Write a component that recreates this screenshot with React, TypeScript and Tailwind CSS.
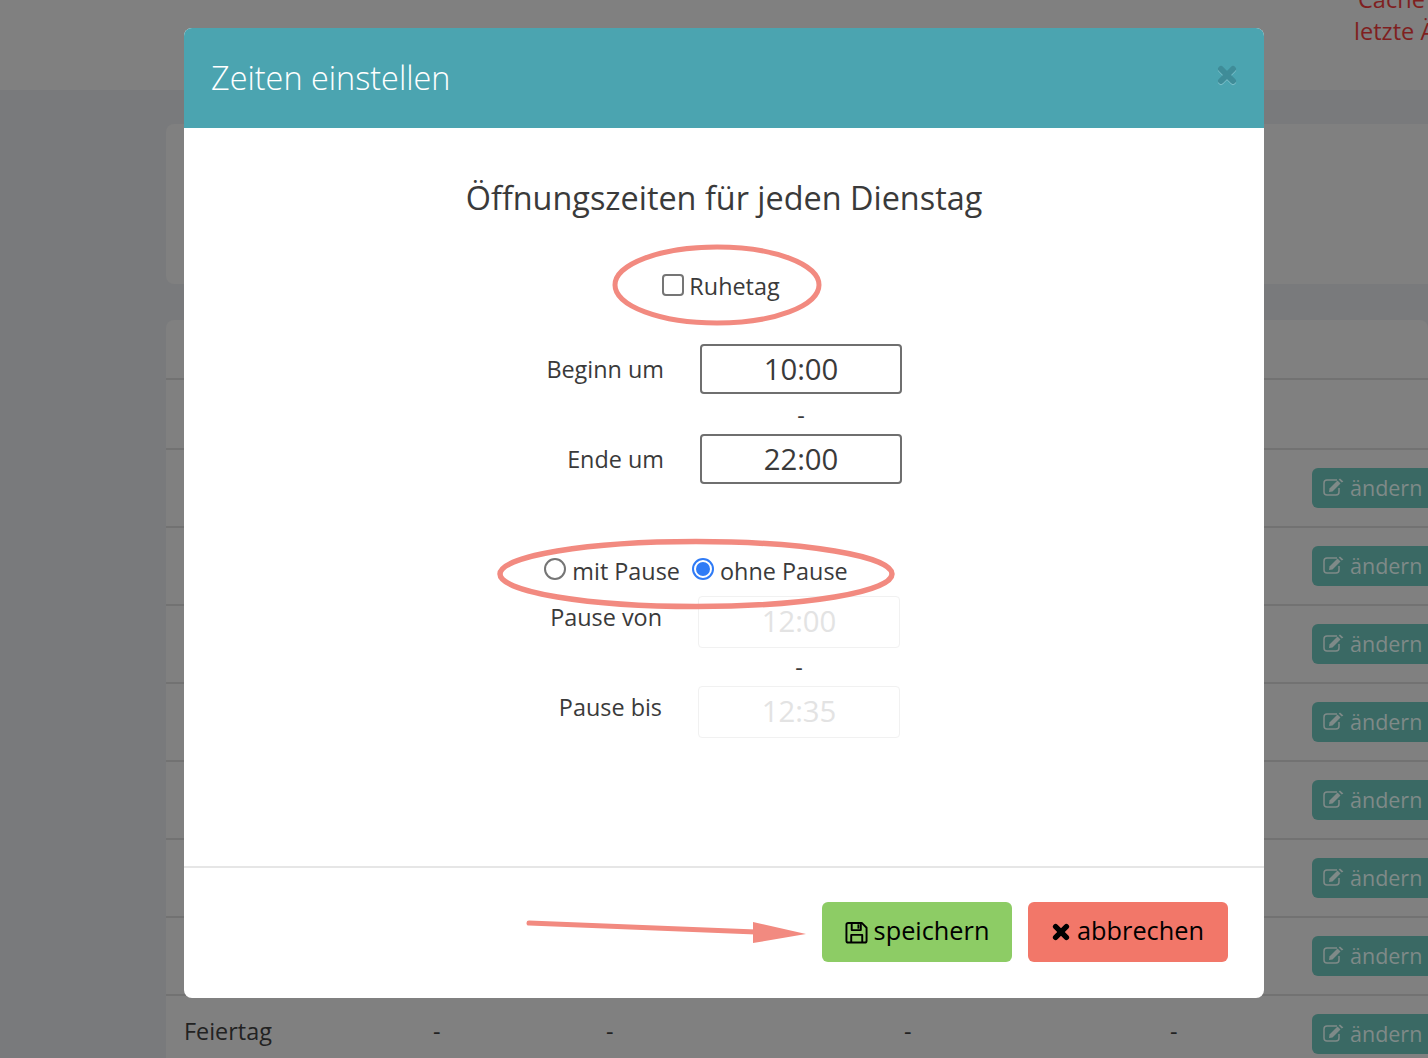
const rows = ["", "", "", "", "", "", ""];

const TimesIcon = ({ className }: { className: string }) => {
    return (
        <svg className={className} viewBox="0 0 20 20" fill="none" stroke="currentColor" strokeWidth="6" strokeLinecap="round">
            <path d="M4 4 L16 16 M16 4 L4 16" />
        </svg>
    );
};

const SaveIcon = ({ className }: { className: string }) => {
    return (
        <svg className={className} viewBox="0 0 24 24" fill="none" stroke="currentColor" strokeWidth="2" strokeLinejoin="round">
            <path d="M3.5 2 H17.5 L22.5 7 V20.5 Q22.5 22.5 20.5 22.5 H3.5 Q1.5 22.5 1.5 20.5 V4 Q1.5 2 3.5 2 Z" />
            <path d="M7 2 V9.5 H16.5 V2" />
            <path d="M6.5 22.5 V14.5 H18 V22.5" />
            <path d="M13 3.5 H15 V8 H13 Z" fill="currentColor" stroke="none" />
        </svg>
    );
};

const EditIcon = ({ className }: { className: string }) => {
    return (
        <svg className={className} viewBox="0 0 21 18" fill="none" stroke="currentColor">
            <path d="M14 2 H4 Q1 2 1 5 V14 Q1 17 4 17 H13 Q16 17 16 14 V10" strokeWidth="1.5" />
            <path d="M6.5 10.5 L14.5 2.5 L17.5 5.5 L9.5 13.5 L6 14 Z" fill="currentColor" stroke="none" />
            <path d="M15.7 1.4 L17 0.4 L20.4 3.6 L18.7 4.4 Z" fill="currentColor" stroke="none" />
        </svg>
    );
};

const ChangeButton = () => {
    return (
        <div className="ml-auto flex h-10 w-[116px] shrink-0 items-center gap-[6px] rounded-l-[6px] bg-[#3a6964] pl-[11px] text-[21.5px] text-[#7f8a88]">
            <EditIcon className="-mt-[2px] h-[18px] w-[21px]" />
            <span>ändern</span>
        </div>
    );
};

const Background = () => {
    return (
        <div className="flex h-[1058px] w-[1428px] flex-col overflow-hidden bg-[#797a7c]">
            <header className="h-[90px] shrink-0 overflow-hidden bg-[#808080]">
                <div className="-mt-[17px] ml-[1354px] w-[200px] whitespace-nowrap text-[23.6px] leading-[32px] text-[#7f1f1f]">
                    <div className="pl-[4px]">Cache</div>
                    <div>letzte Änderung</div>
                </div>
            </header>
            <div className="mt-[34px] ml-[166px] h-[160px] w-[1300px] shrink-0 rounded-lg bg-[#808080]"></div>
            <section className="mt-[36px] ml-[166px] w-[1262px] shrink-0 rounded-t-lg bg-[#808080]">
                <div className="h-[60px] border-b-2 border-[#727272]"></div>
                <div className="h-[70px] border-b-2 border-[#727272]"></div>
                {rows.map((_, i) => (
                    <div key={i} className="flex h-[78px] items-center border-b-2 border-[#727272]">
                        <ChangeButton />
                    </div>
                ))}
                <div className="flex h-[78px] items-center pb-[2px] text-[23.4px] text-[#222222]">
                    <div className="-mt-[4px] flex pl-[18px]">
                        <span className="w-[249px]">Feiertag</span>
                        <span className="w-[173px]">-</span>
                        <span className="w-[298px]">-</span>
                        <span className="w-[266px]">-</span>
                        <span>-</span>
                    </div>
                    <ChangeButton />
                </div>
            </section>
        </div>
    );
};

const TimeField = ({ label, value, disabled }: { label: string; value: string; disabled?: boolean }) => {
    return (
        <div className="flex items-center">
            <label className={`w-[118px] shrink-0 whitespace-nowrap text-right ${disabled ? "-mt-[8px]" : "mt-[1px]"}`}>{label}</label>
            <div
                className={
                    disabled
                        ? "ml-[36px] flex h-[52px] w-[202px] items-center justify-center rounded-[4px] border border-[#f1f1f1] text-[29.3px] text-[#e3e3e3]"
                        : "ml-[36px] flex h-[50px] w-[202px] items-center justify-center rounded-[4px] border-2 border-[#6f6f6f] pt-[2px] text-[29.3px] text-[#3a3a3a]"
                }
            >
                {value}
            </div>
        </div>
    );
};

const Annotations = () => {
    return (
        <svg className="pointer-events-none absolute left-0 top-0 h-[970px] w-[1080px]" viewBox="0 0 1080 970" fill="none">
            <ellipse cx="533" cy="257" rx="102" ry="38" stroke="#f28a80" strokeWidth="5" />
            <ellipse cx="512" cy="546" rx="196" ry="32.5" stroke="#f28a80" strokeWidth="5.5" />
            <path d="M345 895 L572 904" stroke="#f28a80" strokeWidth="5" strokeLinecap="round" />
            <path d="M569 894 L622 906 L569 915 Z" fill="#f28a80" />
        </svg>
    );
};

const Modal = () => {
    return (
        <div className="absolute left-[184px] top-[28px] h-[970px] w-[1080px] overflow-hidden rounded-lg bg-white">
            <div className="flex h-[100px] items-center justify-between bg-[#4ba4b0] pl-[27px] pr-[27px]">
                <h2 className="-mt-[2px] text-[32.4px] font-light text-white">Zeiten einstellen</h2>
                <div className="-mt-[6px] drop-shadow-[0_1px_0_#7fc0ca]">
                    <TimesIcon className="h-[20px] w-[20px] text-[#3f8c98]" />
                </div>
            </div>
            <div className="flex h-[740px] flex-col items-center border-b-2 border-[#e6e6e6] text-[23.4px] text-[#3a3a3a]">
                <h3 className="mb-[1px] mt-[46px] text-[32.4px] leading-[46px]">Öffnungszeiten für jeden Dienstag</h3>
                <div className="mr-[6px] mt-[46px] flex h-[36px] items-center gap-[5px]">
                    <span className="h-[22px] w-[22px] rounded-[4px] border-2 border-[#757575]"></span>
                    <span className="mt-[4px]">Ruhetag</span>
                </div>
                <div className="mt-[41px] w-[356px]">
                    <TimeField label="Beginn um" value="10:00" />
                    <div className="flex h-[40px] items-center justify-center pl-[154px] pt-[4px]">-</div>
                    <TimeField label="Ende um" value="22:00" />
                </div>
                <div className="mr-[56px] mt-[66px] flex h-[40px] items-center">
                    <span className="-mt-[2px] mr-[6px] h-[22px] w-[22px] rounded-full border-2 border-[#757575]"></span>
                    <span className="mt-[3px]">mit Pause</span>
                    <span className="-mt-[2px] ml-[12px] mr-[6px] flex h-[22px] w-[22px] items-center justify-center rounded-full border-2 border-[#2f7bf6]">
                        <span className="h-[14px] w-[14px] rounded-full bg-[#2f7bf6]"></span>
                    </span>
                    <span className="mt-[3px]">ohne Pause</span>
                </div>
                <div className="ml-[-4px] mt-[6px] w-[356px]">
                    <TimeField label="Pause von" value="12:00" disabled />
                    <div className="flex h-[38px] items-center justify-center pl-[154px] pt-[2px]">-</div>
                    <TimeField label="Pause bis" value="12:35" disabled />
                </div>
            </div>
            <div className="flex justify-end gap-4 pr-[36px] pt-[34px] text-[25.3px] text-black">
                <button className="flex h-[60px] w-[190px] items-center justify-center gap-[6px] rounded-[6px] bg-[#8dcc65]">
                    <SaveIcon className="h-[23px] w-[23px]" />
                    <span className="mb-[2px]">speichern</span>
                </button>
                <button className="flex h-[60px] w-[200px] items-center justify-center gap-[7px] rounded-[6px] bg-[#f27769]">
                    <TimesIcon className="h-[18px] w-[18px]" />
                    <span className="mb-[2px]">abbrechen</span>
                </button>
            </div>
            <Annotations />
        </div>
    );
};

export default function App() {
    return (
        <div className="relative h-[1058px] w-[1428px] overflow-hidden font-['Open_Sans',sans-serif]">
            <Background />
            <Modal />
        </div>
    );
}
